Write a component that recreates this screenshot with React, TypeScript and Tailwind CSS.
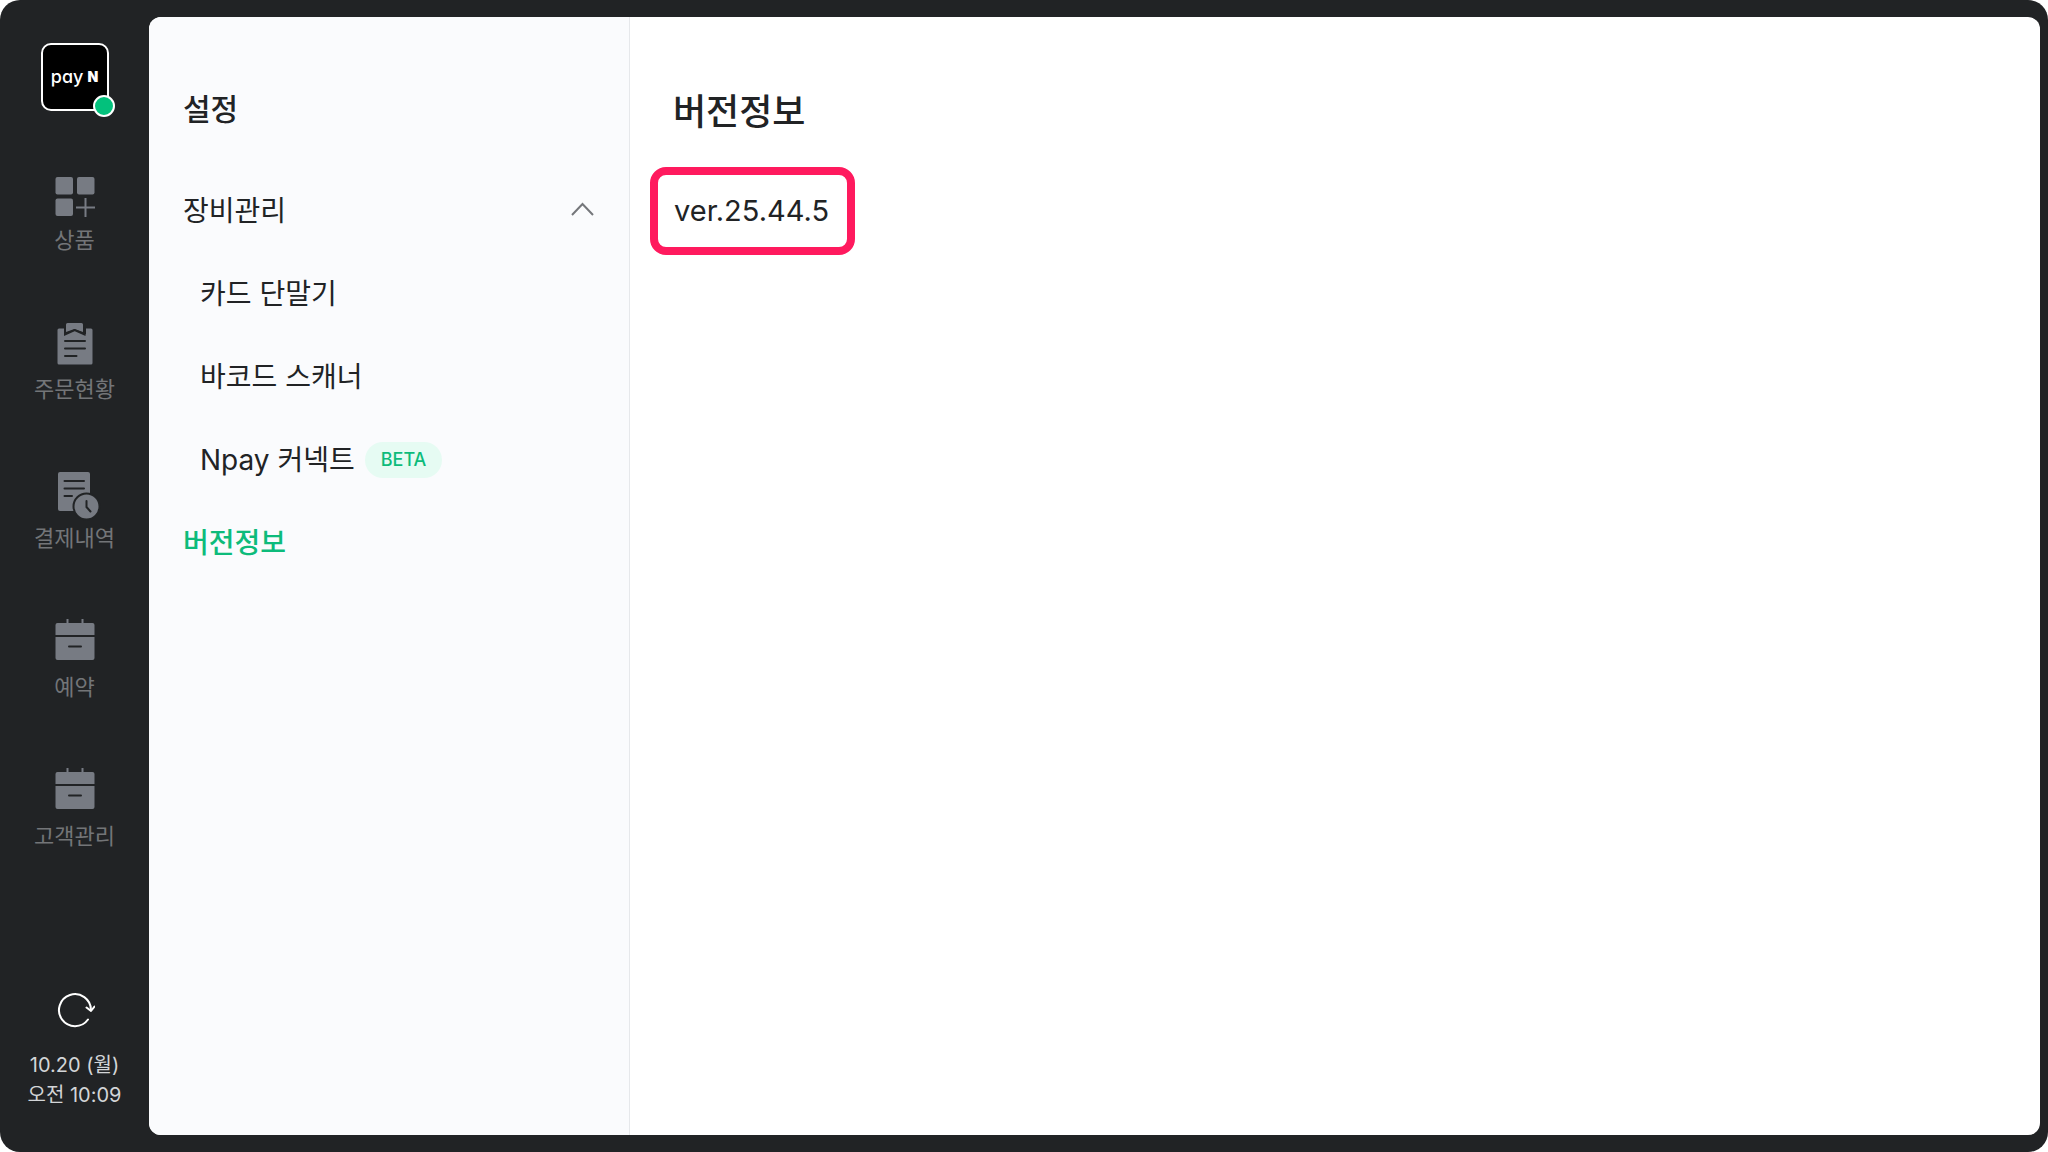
import { useState, type ReactNode } from "react";
import clsx from "clsx";

type NavItem = { id: string; label: string; icon: ReactNode };
type DeviceMenu = { id: string; label: string; beta?: boolean };

function ProductIcon() {
  return (
    <svg viewBox="0 0 48 48" className="h-12 w-12" aria-hidden="true">
      <g fill="#777b83">
        <rect x="4.500" y="5" width="17.500" height="17.500" rx="2" />
        <rect x="26" y="5" width="17.500" height="17.500" rx="2" />
        <rect x="4.500" y="26.500" width="17.500" height="17.500" rx="2" />
      </g>
      <path d="M34.500 26v19M25 35.500h19" stroke="#777b83" strokeWidth="2" />
    </svg>
  );
}

function OrderIcon() {
  return (
    <svg viewBox="0 0 48 48" className="h-12 w-12" aria-hidden="true">
      <path
        d="M8 7.500h5v6l11-4 11 4v-6h5a1.500 1.500 0 0 1 1.500 1.500v33a1.500 1.500 0 0 1-1.500 1.500H8A1.500 1.500 0 0 1 6.500 42V9A1.500 1.500 0 0 1 8 7.500z"
        fill="#777b83"
      />
      <path
        d="M16.500 2h14a1.500 1.500 0 0 1 1.500 1.500V11l-8.500-3L15 11V3.500A1.500 1.500 0 0 1 16.500 2z"
        fill="#777b83"
      />
      <path
        d="M14 7v6.500l9.700-4.500 9.800 4.500V7M14 20h20M14 27.500h20M14 35h11.500"
        fill="none"
        stroke="#212325"
        strokeWidth="2"
        strokeLinecap="round"
      />
    </svg>
  );
}

function HistoryIcon() {
  return (
    <svg viewBox="0 0 48 48" className="h-12 w-12 overflow-visible" aria-hidden="true">
      <rect x="7" y="2" width="32" height="39" rx="2" fill="#777b83" />
      <path
        d="M13.500 11h19.500M13.500 18.500h19.500M13.500 26h7.500"
        stroke="#212325"
        strokeWidth="2"
        strokeLinecap="round"
      />
      <circle cx="35.500" cy="36.500" r="13" fill="#777b83" stroke="#212325" strokeWidth="2" />
      <path
        d="M35.500 31v6l4 4.500"
        fill="none"
        stroke="#212325"
        strokeWidth="2"
        strokeLinecap="round"
      />
    </svg>
  );
}

function CalendarIcon() {
  return (
    <svg viewBox="0 0 48 48" className="h-12 w-12" aria-hidden="true">
      <path
        d="M6.500 4h35a2 2 0 0 1 2 2v10h-39V6a2 2 0 0 1 2-2zM4.500 18h39v21a2 2 0 0 1-2 2h-35a2 2 0 0 1-2-2z"
        fill="#777b83"
      />
      <path d="M16.500 0v5M31.500 0v5" stroke="#777b83" strokeWidth="2" />
      <path d="M18 27.500h12" stroke="#212325" strokeWidth="2" strokeLinecap="round" />
    </svg>
  );
}

function RefreshIcon() {
  return (
    <svg
      viewBox="0 0 40 40"
      className="h-10 w-10"
      fill="none"
      stroke="#ffffff"
      strokeWidth="2"
      strokeLinecap="round"
      strokeLinejoin="round"
      aria-hidden="true"
    >
      <path d="M33 29.500A16 16 0 1 1 36 20" />
      <path d="M31.500 17.500l4.500 3.500 3.500-4.500" />
    </svg>
  );
}

const NAV_ITEMS: NavItem[] = [
  { id: "product", label: "상품", icon: <ProductIcon /> },
  { id: "order", label: "주문현황", icon: <OrderIcon /> },
  { id: "history", label: "결제내역", icon: <HistoryIcon /> },
  { id: "booking", label: "예약", icon: <CalendarIcon /> },
  { id: "customer", label: "고객관리", icon: <CalendarIcon /> },
];

const DEVICE_MENUS: DeviceMenu[] = [
  { id: "card", label: "카드 단말기" },
  { id: "barcode", label: "바코드 스캐너" },
  { id: "npay", label: "Npay 커넥트", beta: true },
];

function Sidebar() {
  return (
    <aside className="flex w-[149px] shrink-0 flex-col items-center pt-[43px] pb-[42px]">
      <button type="button" className="relative shrink-0" aria-label="pay N">
        <span className="flex h-[68px] w-[68px] items-center justify-center gap-1 rounded-[10px] border-2 border-white bg-black leading-none text-white">
          <span className="text-lg font-medium [font-feature-settings:'cv11']">pay</span>
          <span className="text-sm font-black">N</span>
        </span>
        <span className="absolute -right-1.5 -bottom-1.5 h-[22px] w-[22px] rounded-full border-2 border-white bg-[#03c17c]" />
      </button>

      <nav className="mt-[61px] flex w-full flex-col gap-[67px]">
        {NAV_ITEMS.map((item) => (
          <button
            key={item.id}
            type="button"
            className="flex flex-col items-center gap-1.5 text-[22px] leading-7 text-[#737578]"
          >
            {item.icon}
            {item.label}
          </button>
        ))}
      </nav>

      {/* Refresh + clock */}
      <div className="mt-auto flex flex-col items-center">
        <button type="button" aria-label="새로고침">
          <RefreshIcon />
        </button>
        <p className="mt-5 text-center text-xl leading-[30px] text-[#d3d5d7]">
          10.20 (월)
          <br />
          오전 10:09
        </p>
      </div>
    </aside>
  );
}

export default function App() {
  const [open, setOpen] = useState(true);
  const [selected, setSelected] = useState("version");

  return (
    <div className="flex min-h-screen rounded-[20px] bg-[#212325] font-['Inter','Noto_Sans_CJK_KR',sans-serif] text-[#212325]">
      <Sidebar />

      <div className="my-[17px] mr-2 flex min-w-0 flex-1 overflow-hidden rounded-xl bg-white">
        {/* Settings menu */}
        <section className="w-[481px] shrink-0 border-r border-[#e6e8eb] bg-[#fafbfd] px-[34px] pt-[72px]">
          <h2 className="text-3xl leading-10 font-medium">설정</h2>

          <div className="mt-10 text-[28px]">
            <button
              type="button"
              aria-expanded={open}
              onClick={() => setOpen(!open)}
              className="flex h-[83px] w-full items-center justify-between"
            >
              장비관리
              <svg
                viewBox="0 0 24 24"
                className={clsx("h-6 w-6", !open && "rotate-180")}
                fill="none"
                stroke="#75777b"
                strokeWidth="2"
                aria-hidden="true"
              >
                <path d="M1 16L11.500 5 22 16" />
              </svg>
            </button>

            {open && (
              <ul>
                {DEVICE_MENUS.map((menu) => (
                  <li key={menu.id}>
                    <button
                      type="button"
                      onClick={() => setSelected(menu.id)}
                      className={clsx(
                        "flex h-[83px] w-full items-center gap-2.5 pl-[17px]",
                        selected === menu.id && "font-medium text-[#0dbb7b]",
                      )}
                    >
                      {menu.label}
                      {menu.beta && (
                        <span className="rounded-full bg-[#e6fbf3] px-4 text-lg leading-9 font-medium text-[#0dbb7b]">
                          BETA
                        </span>
                      )}
                    </button>
                  </li>
                ))}
              </ul>
            )}

            <button
              type="button"
              onClick={() => setSelected("version")}
              className={clsx(
                "flex h-[83px] w-full items-center",
                selected === "version" && "font-medium text-[#0dbb7b]",
              )}
            >
              버전정보
            </button>
          </div>
        </section>

        {/* Version info */}
        <main className="min-w-0 flex-1 px-5 pt-[71px]">
          <h1 className="px-[23px] text-4xl leading-[48px] font-medium">버전정보</h1>
          <p className="mt-[31px] inline-block rounded-2xl border-8 border-[#ff1a5e] py-3.5 pr-[18px] pl-4 text-[29px] leading-[44px]">
            ver.25.44.5
          </p>
        </main>
      </div>
    </div>
  );
}
